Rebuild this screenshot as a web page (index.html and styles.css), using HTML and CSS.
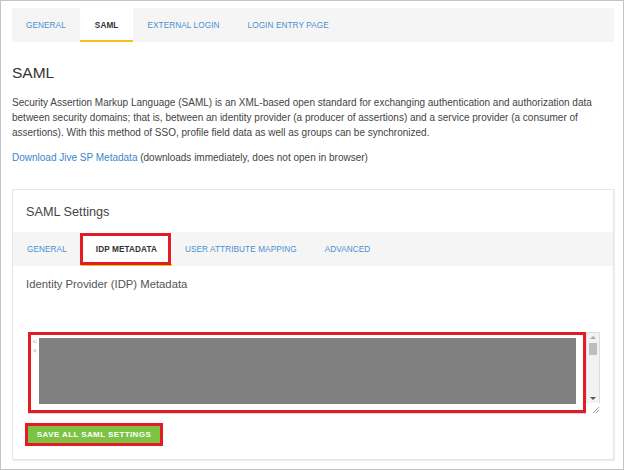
FILE: index.html
```html
<!DOCTYPE html>
<html>
<head>
<meta charset="utf-8">
<link rel="stylesheet" href="styles.css">
</head>
<body>
<div class="frame">
  <nav class="tabs">
    <span class="tab">GENERAL</span>
    <span class="tab active">SAML</span>
    <span class="tab">EXTERNAL LOGIN</span>
    <span class="tab">LOGIN ENTRY PAGE</span>
  </nav>
  <h1 class="title">SAML</h1>
  <p class="desc">Security Assertion Markup Language (SAML) is an XML-based open standard for exchanging authentication and authorization data between security domains; that is, between an identity provider (a producer of assertions) and a service provider (a consumer of assertions). With this method of SSO, profile field data as well as groups can be synchronized.</p>
  <p class="desc"><a class="link">Download Jive SP Metadata</a> (downloads immediately, does not open in browser)</p>
  <section class="card">
    <h2 class="card-title">SAML Settings</h2>
    <nav class="subtabs">
      <span class="tab">GENERAL</span>
      <span class="tab active marked">IDP METADATA</span>
      <span class="tab">USER ATTRIBUTE MAPPING</span>
      <span class="tab">ADVANCED</span>
    </nav>
    <div class="card-body">
      <div class="label">Identity Provider (IDP) Metadata</div>
      <div class="textarea">
        <div class="ta-content">
          <span class="ta-text">&lt;<br>&lt;</span>
          <div class="redact"></div>
        </div>
        <div class="scrollbar">
          <span class="arrow up"></span>
          <span class="thumb"></span>
          <span class="track"></span>
          <span class="arrow down"></span>
          <span class="grip"></span>
        </div>
      </div>
      <div class="btn-wrap"><button class="btn">SAVE ALL SAML SETTINGS</button></div>
    </div>
  </section>
</div>
</body>
</html>
```

FILE: styles.css
```css
html, body {
  margin: 0;
  padding: 0;
  background: #fff;
}
body {
  font-family: "Liberation Sans", Arial, sans-serif;
  color: #333;
}
.frame {
  width: 624px;
  height: 470px;
  box-sizing: border-box;
  border: 1px solid #c4c4c4;
  padding: 7px 9px 0 11px;
  overflow: hidden;
}
.tabs, .subtabs {
  display: flex;
  background: #f5f5f5;
  height: 34px;
}
.tab {
  display: flex;
  align-items: center;
  padding: 0 14px;
  font-size: 8.2px;
  color: #4a90d0;
  letter-spacing: 0.1px;
}
.tabs .tab:nth-child(2) { padding: 0 15px; }
.tab.active {
  background: #fff;
  color: #333;
  font-weight: bold;
  box-shadow: inset 0 -2px 0 #f0c419;
}
.title {
  font-size: 15.5px;
  font-weight: normal;
  color: #333;
  margin: 21px 0 0 0;
  line-height: 20px;
}
.desc {
  font-size: 10px;
  line-height: 15px;
  color: #444;
  margin: 12px 0 0 0;
  width: 602px;
}
.desc + .desc { margin-top: 10px; }
.link { color: #3c87c8; }
.card {
  margin-top: 24px;
  border: 1px solid #e6e6e6;
  box-shadow: 1px 1px 1px #f0f0f0;
  height: 271px;
  box-sizing: border-box;
}
.card-title {
  font-size: 12.7px;
  font-weight: normal;
  color: #444;
  margin: 0;
  padding: 14px 13px 0;
  height: 28px;
  line-height: 16px;
}
.subtabs .tab:nth-child(2) { padding: 0 15px; }
.subtabs .tab:nth-child(3) { padding: 0 14px 0 13px; }
.marked { position: relative; }
.marked::after {
  content: "";
  position: absolute;
  left: -1px;
  top: 1px;
  right: 1px;
  bottom: 1px;
  border: 3px solid #e31b23;
}
.card-body {
  padding: 11px 13px 0 15px;
}
.label {
  font-size: 11.3px;
  color: #555;
  line-height: 14px;
  margin-left: -2px;
}
.textarea {
  display: flex;
  margin-top: 41px;
  width: 572px;
  height: 82px;
  box-sizing: border-box;
  border: 1px solid #dcdcdc;
}
.ta-content {
  flex: 1;
  position: relative;
  border: 3px solid #e31b23;
  margin: -1px 0 0 -1px;
  height: 81px;
  box-sizing: border-box;
}
.ta-text {
  position: absolute;
  left: 2px;
  top: 2px;
  font-size: 7px;
  line-height: 9px;
  color: #aaa;
}
.redact {
  position: absolute;
  left: 8px;
  top: 3px;
  right: 7px;
  bottom: 6px;
  background: #808080;
}
.scrollbar {
  width: 12px;
  display: flex;
  flex-direction: column;
  background: #f2f2f2;
  border-left: 1px solid #e2e2e2;
}
.arrow {
  height: 9px;
  position: relative;
}
.arrow.up::after, .arrow.down::after {
  content: "";
  position: absolute;
  left: 3px;
  border-left: 3px solid transparent;
  border-right: 3px solid transparent;
}
.arrow.up::after { top: 3px; border-bottom: 3px solid #aaa; }
.arrow.down::after { top: 3px; border-top: 3px solid #555; }
.thumb {
  height: 12px;
  margin: 1px 2px;
  background: #bdbdbd;
}
.track { flex: 1; }
.grip {
  height: 11px;
  background: #fff;
  margin: 0 -1px -1px -1px;
  position: relative;
}
.grip::after {
  content: "";
  position: absolute;
  right: 1px;
  bottom: 1px;
  width: 6px;
  height: 6px;
  background: linear-gradient(135deg, transparent 45%, #999 45%, #999 55%, transparent 55%, transparent 70%, #999 70%, #999 80%, transparent 80%);
}
.btn-wrap {
  display: inline-block;
  margin: 9px 0 0 -3px;
  border: 3px solid #e31b23;
}
.btn {
  display: block;
  border: 0;
  background: #7cc243;
  color: #fff;
  font-family: "Liberation Sans", Arial, sans-serif;
  font-weight: bold;
  font-size: 8px;
  letter-spacing: 0.4px;
  width: 132px;
  height: 17px;
  padding: 0;
}
```
